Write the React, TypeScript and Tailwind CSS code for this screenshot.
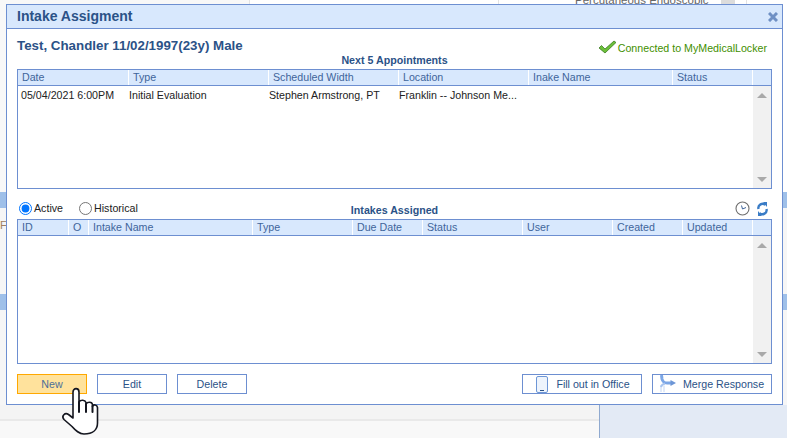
const apptColumns = [
  { label: "Date", width: "w-[111px]" },
  { label: "Type", width: "w-[140px]" },
  { label: "Scheduled Width", width: "w-[130px]" },
  { label: "Location", width: "w-[130px]" },
  { label: "Inake Name", width: "w-[144px]" },
  { label: "Status", width: "w-[80px]" },
];

const intakeColumns = [
  { label: "ID", width: "w-[51px]" },
  { label: "O", width: "w-[20px]" },
  { label: "Intake Name", width: "w-[164px]" },
  { label: "Type", width: "w-[100px]" },
  { label: "Due Date", width: "w-[70px]" },
  { label: "Status", width: "w-[100px]" },
  { label: "User", width: "w-[90px]" },
  { label: "Created", width: "w-[70px]" },
  { label: "Updated", width: "w-[70px]" },
];

function TableHeader({ columns }: { columns: { label: string; width: string }[] }) {
  return (
    <div className="flex h-[16px] shrink-0 border-b border-[#6d8fd1] bg-[#d8e8fd] text-[#3f659b]">
      {columns.map((c) => (
        <div key={c.label} className={`${c.width} shrink-0 border-r border-white pl-[4px] leading-[15px]`}>
          {c.label}
        </div>
      ))}
      <div className="flex-1" />
    </div>
  );
}

function Scrollbar() {
  return (
    <div className="flex w-[18px] shrink-0 flex-col items-center justify-between bg-[#f1f1f1] pb-[6px] pt-[7px]">
      <div className="h-0 w-0 border-x-[5px] border-b-[5px] border-x-transparent border-b-[#a9a9a9]" />
      <div className="h-0 w-0 border-x-[5px] border-t-[5px] border-x-transparent border-t-[#a9a9a9]" />
    </div>
  );
}

function ActionButton({ children, width }: { children: React.ReactNode; width: string }) {
  return (
    <button className={`${width} flex h-[20px] items-center justify-center border border-[#6d8fd1] bg-white text-[#2b5287]`}>
      {children}
    </button>
  );
}

function BackgroundPage() {
  return (
    <div className="flex h-full flex-col bg-[#f6f6f6] text-[11px] text-[#666]">
      <div className="flex h-[192px] shrink-0 bg-white">
        <div className="w-[250px] border-r border-[#e3e3e3] bg-[#f8f8f8]" />
        <div className="w-[249px] border-r border-[#e3e3e3]" />
        <div className="w-[222px] overflow-hidden pl-[76px]">
          <div className="-mt-[7px] whitespace-nowrap text-[11.5px] leading-[14px]">Percutaneous Endoscopic</div>
        </div>
        <div className="h-full w-[14px] bg-[#dcdcdc]" />
        <div className="w-[12px] border-r border-[#e3e3e3]" />
      </div>
      <div className="h-[16px] shrink-0 bg-[#9fc0e9]" />
      <div className="h-[86px] shrink-0 pt-[9px] text-[#a08060]">
        <div className="text-[11px]">F</div>
      </div>
      <div className="h-[16px] shrink-0 bg-[#9fc0e9]" />
      <div className="h-[95px] shrink-0" />
      <div className="flex flex-1">
        <div className="flex w-[600px] flex-col border-r border-[#8fa9cf]">
          <div className="h-[16px] border-b-2 border-[#e9e9e9] bg-[#f4f4f4]" />
          <div className="flex-1 bg-[#f8f8f8]" />
        </div>
        <div className="flex-1 bg-[#e3eaf5]" />
      </div>
    </div>
  );
}

function HandCursor() {
  return (
    <svg className="absolute left-[60px] top-[385px] h-[52px] w-[40px]" viewBox="0 0 40 52">
      <path
        d="M13 7C13 2.500 19 2.500 19 7L19 17C20.500 14.500 25 14.500 26 17.500L26 19C27.500 16.500 32 16.500 32.500 19.500L32.500 21.500C33.500 19 37 19.500 37.500 22.500L37.500 38C37.500 44.500 33 49 24 49C19 49 16 46 12 41.500L4 34.500C1 31 5 27 8.500 29.500L13 33Z"
        fill="#fff"
        stroke="#14161f"
        strokeWidth="1.600"
        strokeLinejoin="round"
      />
      <path d="M19 17L19 27M26 19L26 27M32.500 21L32.500 27" fill="none" stroke="#14161f" strokeWidth="2" strokeLinecap="round" />
    </svg>
  );
}

export default function App() {
  return (
    <div className="relative h-[438px] w-[787px] overflow-hidden font-['Liberation_Sans',Arial,sans-serif] text-[10.67px]">
      <div className="absolute inset-0">
        <BackgroundPage />
      </div>

      {/* Modal */}
      <div className="absolute left-[6px] top-[4px] flex h-[401px] w-[777px] flex-col border border-[#6d8fd1] bg-white">
        <div className="flex h-[24px] shrink-0 items-center justify-between border-b border-[#6d8fd1] bg-[#d8e8fd] pl-[10px] pr-[4px]">
          <span className="text-[14px] font-bold text-[#2b5287]">Intake Assigment</span>
          <svg className="h-[10px] w-[10px]" viewBox="0 0 10 10">
            <path d="M1 1L9 9M9 1L1 9" stroke="#6f90c4" strokeWidth="3" />
          </svg>
        </div>

        <div className="flex flex-1 flex-col px-[10px]">
          <div className="grid h-[40px] shrink-0 grid-cols-[1fr_auto_1fr]">
            <div className="whitespace-nowrap pt-[9px] text-[13.33px] font-bold leading-[16px] text-[#2b5287]">
              Test, Chandler 11/02/1997(23y) Male
            </div>
            <div className="self-end pb-[2px] font-bold leading-[13px] text-[#2b5287]">Next 5 Appointments</div>
            <div className="flex items-start justify-end gap-[1px] pt-[11px] pr-[5px] text-[#3f8f00]">
              <svg className="h-[14px] w-[19px]" viewBox="0 0 19 14">
                <path d="M1 8L3.500 5.500L7 9L16 1L18 2.500L7 13Z" fill="#6cc03a" stroke="#2d6e12" strokeWidth="0.700" strokeLinejoin="round" />
              </svg>
              <span className="pt-[1px] leading-[15px]">Connected to MyMedicalLocker</span>
            </div>
          </div>

          <div className="flex h-[120px] shrink-0 flex-col border border-[#6d8fd1]">
            <TableHeader columns={apptColumns} />
            <div className="flex min-h-0 flex-1">
              <div className="flex flex-1 items-start pt-[3px] leading-[13px] text-[#222]">
                <div className="w-[111px] shrink-0 pl-[3px]">05/04/2021 6:00PM</div>
                <div className="w-[140px] shrink-0">Initial Evaluation</div>
                <div className="w-[130px] shrink-0">Stephen Armstrong, PT</div>
                <div className="w-[118px] shrink-0">Franklin -- Johnson Me...</div>
              </div>
              <Scrollbar />
            </div>
          </div>

          <div className="grid h-[30px] shrink-0 grid-cols-[1fr_auto_1fr]">
            <div className="flex items-end pb-[4px] text-[#222]">
              <label className="flex items-center pl-[2px]">
                <input type="radio" name="scope" defaultChecked className="m-0 h-[13px] w-[13px]" />
                <span className="ml-[2px] leading-[13px]">Active</span>
              </label>
              <label className="ml-[16px] flex items-center">
                <input type="radio" name="scope" className="m-0 h-[13px] w-[13px]" />
                <span className="ml-[2px] leading-[13px]">Historical</span>
              </label>
            </div>
            <div className="self-end pb-[2px] font-bold leading-[13px] text-[#2b5287]">Intakes Assigned</div>
            <div className="flex items-end justify-end gap-[7px] pb-[3px] pr-[4px]">
              <svg className="h-[15px] w-[15px]" viewBox="0 0 15 15">
                <circle cx="7.500" cy="7.500" r="6.500" fill="none" stroke="#6f6f6f" strokeWidth="1.100" />
                <path d="M6.500 4.500L7.500 8L11 6.500" fill="none" stroke="#3f659b" strokeWidth="1" />
              </svg>
              <svg className="h-[14px] w-[11px]" viewBox="0 0 11 14">
                <path d="M8.500 3A4.200 4.200 0 0 0 1.500 7" fill="none" stroke="#3a7cc6" strokeWidth="2.400" />
                <path d="M2.500 11A4.200 4.200 0 0 0 9.500 7" fill="none" stroke="#3a7cc6" strokeWidth="2.400" />
                <path d="M6 0L10 0L10 5Z" fill="#3a7cc6" />
                <path d="M5 14L1 14L1 9Z" fill="#3a7cc6" />
              </svg>
            </div>
          </div>

          <div className="flex h-[145px] shrink-0 flex-col border border-[#6d8fd1]">
            <TableHeader columns={intakeColumns} />
            <div className="flex min-h-0 flex-1">
              <div className="flex-1" />
              <Scrollbar />
            </div>
          </div>

          <div className="mt-[10px] flex h-[20px] shrink-0 items-center">
            <button className="flex h-[20px] w-[70px] items-center justify-center border border-[#ffa800] bg-[#ffe29c] text-[#4d6f99]">
              New
            </button>
            <div className="ml-[10px]">
              <ActionButton width="w-[70px]">Edit</ActionButton>
            </div>
            <div className="ml-[10px]">
              <ActionButton width="w-[70px]">Delete</ActionButton>
            </div>
            <div className="ml-auto">
              <ActionButton width="w-[120px] pl-[2px]">
                <svg className="mr-[8px] h-[17px] w-[12px]" viewBox="0 0 12 17">
                  <rect x="0.500" y="0.500" width="11" height="16" rx="1.500" fill="#eef4fc" stroke="#6d96d6" />
                  <path d="M4 14.500L8 14.500" stroke="#2b5287" />
                </svg>
                Fill out in Office
              </ActionButton>
            </div>
            <div className="ml-[10px]">
              <ActionButton width="w-[120px]">
                <svg className="mr-[7px] h-[18px] w-[16px]" viewBox="0 0 16 18">
                  <path d="M1 10.500L1 17M4 10.500L4 17" fill="none" stroke="#c3d6f3" strokeWidth="1" />
                  <path d="M1.500 0L2 4Q3 8 7 8L11 8" fill="none" stroke="#7ba6e6" strokeWidth="3" />
                  <path d="M1 12Q1.500 9.500 5 8.500" fill="none" stroke="#a8c4ee" strokeWidth="2" />
                  <path d="M10.500 5L16 8L10.500 11Z" fill="#6d96d6" />
                </svg>
                Merge Response
              </ActionButton>
            </div>
          </div>
        </div>
      </div>

      <HandCursor />
    </div>
  );
}
